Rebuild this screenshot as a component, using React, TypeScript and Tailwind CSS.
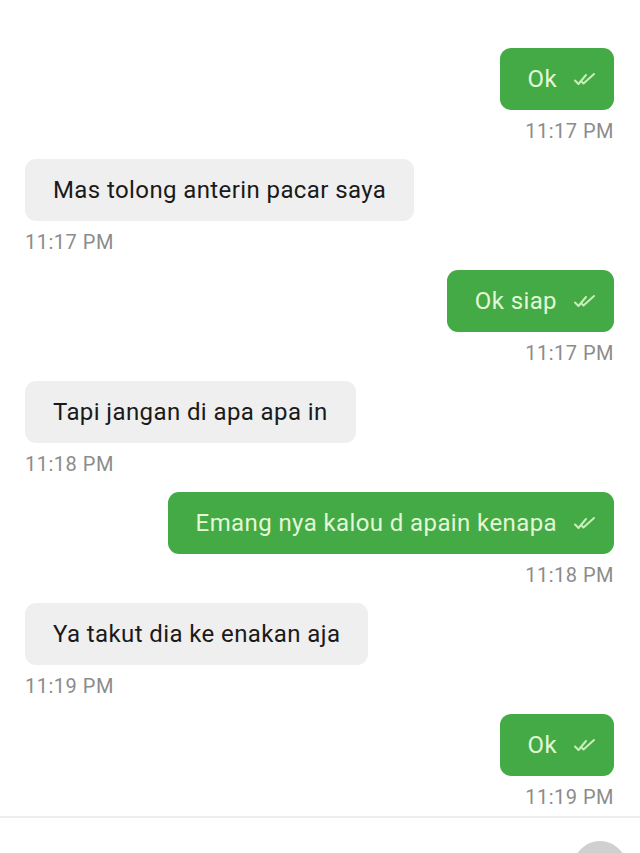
import React from "react";

type Msg = { text: string; time: string; mine: boolean };

const messages: Msg[] = [
  { text: "Ok", time: "11:17 PM", mine: true },
  { text: "Mas tolong anterin pacar saya", time: "11:17 PM", mine: false },
  { text: "Ok siap", time: "11:17 PM", mine: true },
  { text: "Tapi jangan di apa apa in", time: "11:18 PM", mine: false },
  { text: "Emang nya kalou d apain kenapa", time: "11:18 PM", mine: true },
  { text: "Ya takut dia ke enakan aja", time: "11:19 PM", mine: false },
  { text: "Ok", time: "11:19 PM", mine: true },
];

const DoubleCheck = () => (
  <svg width="22" height="14" viewBox="0 0 22 14" fill="none" className="shrink-0">
    <path d="M1 8.5 L4.5 12 L12 3" stroke="#c9efb9" strokeWidth="2" strokeLinecap="round" strokeLinejoin="round" />
    <path d="M7 9 L9.5 11.5 L20 2" stroke="#c9efb9" strokeWidth="2" strokeLinecap="round" strokeLinejoin="round" />
  </svg>
);

const Bubble = ({ msg }: { msg: Msg }) => (
  <div className={msg.mine ? "flex flex-col items-end" : "flex flex-col items-start"}>
    {msg.mine ? (
      <div className="flex h-[62px] items-center gap-[17px] rounded-[11px] bg-[#44aa45] pl-[28px] pr-[18px] text-[24px] tracking-[0.4px] text-[#e2f8d6]">
        <span>{msg.text}</span>
        <DoubleCheck />
      </div>
    ) : (
      <div className="flex h-[62px] items-center rounded-[11px] bg-[#efefef] px-[28px] text-[24px] tracking-[0.4px] text-[#1a1a1a]">
        {msg.text}
      </div>
    )}
    <div className="text-[20px] leading-[42px] tracking-[0.5px] text-[#8c8c8c]">{msg.time}</div>
  </div>
);

export default function App() {
  return (
    <div className="flex h-[853px] w-[640px] flex-col overflow-hidden bg-white font-['Roboto',sans-serif]">
      <div className="flex flex-col gap-[7px] pl-[25px] pr-[26px] pt-[48px]">
        {messages.map((m, i) => (
          <Bubble key={i} msg={m} />
        ))}
      </div>
      <div className="mt-[-2px] flex flex-1 items-start justify-end border-t-2 border-[#eeeeee] pr-[13px] pt-[23px]">
        <div className="h-[54px] w-[54px] rounded-full bg-[#d0d0d0]" />
      </div>
    </div>
  );
}
